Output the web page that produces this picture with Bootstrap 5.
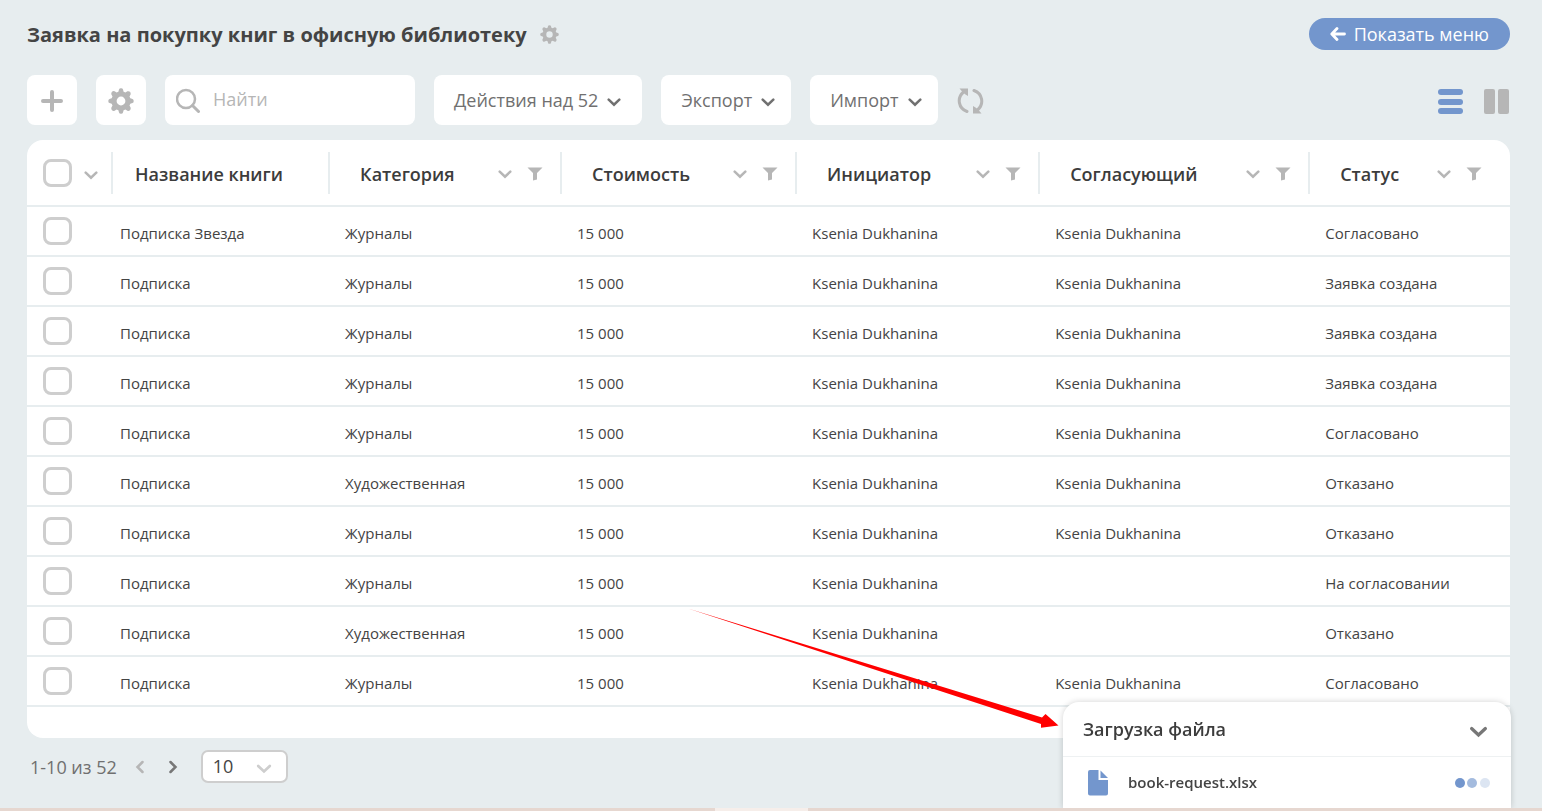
<!DOCTYPE html>
<html lang="ru">
<head>
<meta charset="utf-8">
<meta name="viewport" content="width=device-width, initial-scale=1">
<title>Заявка на покупку книг в офисную библиотеку</title>
<link href="https://cdn.jsdelivr.net/npm/bootstrap@5.3.0/dist/css/bootstrap.min.css" rel="stylesheet">
<style>
  :root { --page: #e7edef; --ink: #444; --muted: #777; --icon: #b6b6b6; --accent: #7396cd; }
  body { font-family: "Open Sans", "Noto Sans", sans-serif; font-size: 15px; color: var(--ink); background: var(--page); overflow-x: hidden; }
  .page-wrap { padding: 18px 32px 28px 27px; }
  svg { display: block; flex: none; }
  .page-title { padding-top: 1px; font-size: 20px; line-height: 31px; font-weight: 700; }
  .title-row { gap: 13px; }
  .btn-plain { padding: 0; border: 0; color: var(--icon); }
  .btn-dark-icon { color: var(--muted); }
  .btn-menu { height: 32px; padding: 0 21px; border: 0; font-size: 18px; line-height: 32px; font-weight: 500; color: #fff; background: var(--accent); }
  .toolbar { gap: 19px; margin-top: 25px; }
  .tool { height: 50px; gap: 9px; padding: 0 21px 0 20px; border: 0; border-radius: 8px; background: #fff; color: #707070; font-size: 18px; font-weight: 500; }
  .tool-menu { padding-right: 16px; }
  .tool-square { width: 50px; padding: 2px 0 0; color: var(--icon); }
  .tool:hover { background: #f8fafb; color: var(--muted); }
  .search-box { width: 250px; height: 50px; padding: 0 11px; gap: 13px; background: #fff; border-radius: 8px; color: var(--icon); }
  .search-box input { padding: 0 0 2px; border: 0; background: none; font-size: 18px; color: var(--ink); box-shadow: none; }
  .search-box input::placeholder { color: var(--icon); opacity: 1; }
  .refresh { padding-top: 2px; }
  .views { gap: 20px; padding-top: 3px; }
  .sheet { margin-top: 15px; padding-bottom: 31px; background: #fff; border-radius: 16px; }
  .requests { table-layout: fixed; width: 100%; min-width: 1200px; }
  .requests th { height: 66px; padding: 12px 0 0; border-bottom: 2px solid var(--page); font-size: 18px; font-weight: 600; vertical-align: top; }
  .requests .head { height: 42px; gap: 15px; padding: 2px 17px 0 30px; border-left: 2px solid var(--page); color: var(--icon); }
  .requests th:last-child .head { padding-right: 28px; }
  .requests .head-text { color: #3c3c3c; }
  .requests td { height: 50px; padding: 4px 0 0 17px; border-bottom: 2px solid var(--page); vertical-align: middle; white-space: nowrap; }
  .requests .pick { padding: 0 13px 0 16px; vertical-align: middle; }
  .requests .name-cell { padding-left: 9px; }
  .requests .head-name { padding-left: 22px; }
  .requests .form-check-input { display: block; width: 29px; height: 28px; margin: 0; border: 3px solid #cecece; border-radius: 8px; }
  .pager { margin-top: 12px; padding-left: 3px; gap: 23px; font-size: 18px; font-weight: 500; color: #707070; }
  .pager-count { padding-top: 1px; margin-right: -5px; }
  .page-size { width: 87px; height: 33px; }
  .page-size select { height: 33px; padding: 0 10px; border: 2px solid #cecece; border-radius: 7px; background: #fff; font-size: 18px; line-height: 29px; font-weight: 500; color: var(--ink); }
  .page-size svg { position: absolute; right: 16px; top: 13px; color: #cecece; pointer-events: none; }
  .upload { position: fixed; right: 31px; bottom: 3px; width: 448px; background: #fff; border-radius: 16px 16px 0 0; box-shadow: 0 0 6px rgba(0,0,0,.18); }
  .upload-head { height: 55px; padding: 0 23px 0 20px; border-bottom: 1px solid #eef1f2; }
  .upload-title { font-size: 18px; font-weight: 600; color: #3c3c3c; }
  .upload-file { height: 51px; padding: 0 21px 0 25px; color: var(--accent); }
  .file-name { margin-left: 20px; color: var(--ink); font-weight: 600; }
  .pointer { position: absolute; right: calc(100% + 4px); top: -94px; pointer-events: none; }
  .edge { position: fixed; left: 0; right: 0; bottom: 0; height: 3px; background: #e6d7d0; }
  .edge span { height: 3px; width: 6%; margin-left: 46.4%; background: #f6eeea; }
</style>
</head>
<body>
<svg class="d-none" aria-hidden="true">
  <symbol id="chev" viewBox="0 0 14 10"><path d="M1.700 2.700l5.300 5 5.300-5" fill="none" stroke="currentColor" stroke-width="2.500" stroke-linecap="round" stroke-linejoin="miter"/></symbol>
  <symbol id="funnel" viewBox="0 0 16 14"><path d="M.5.500h15L10 6v6.500l-4 1V6z" fill="currentColor"/></symbol>
  <symbol id="gear" viewBox="0 0 26 26"><path fill="currentColor" fill-rule="evenodd" d="M11 1.500Q11.300.3 13 .3t2 1.200l.6 2.200 1.800.7 2-1.100q1.600-.5 2.600.5t.6 2.600l-1.100 2 .8 1.900 2.200.6q1.200.3 1.200 2.100t-1.200 2.100l-2.200.6-.8 1.900 1.100 2q.5 1.500-.6 2.600t-2.600.5l-2-1.100-1.800.7-.6 2.200q-.3 1.200-2 1.200t-2-1.200l-.6-2.200-1.800-.7-2 1.100q-1.500.6-2.600-.5T3.400 19.600l1.100-2-.8-1.900-2.200-.6Q.3 14.800.3 13t1.200-2.100l2.200-.6.8-1.900-1.100-2Q2.900 4.900 4 3.800t2.600-.5l2 1.100 1.800-.7zM13 8.600a4.400 4.400 0 1 0 0 8.800 4.400 4.400 0 0 0 0-8.800z"/></symbol>
</svg>

<main class="page-wrap">
  <header class="title-row d-flex align-items-center">
    <h1 class="page-title m-0">Заявка на покупку книг в офисную библиотеку</h1>
    <button class="btn btn-plain me-auto" type="button" aria-label="Настройки заявки"><svg width="19" height="19"><use href="#gear"/></svg></button>
    <button class="btn btn-menu rounded-pill d-flex align-items-center gap-2" type="button">
      <svg width="16" height="14" viewBox="0 0 16 14"><path d="M7 1.500L1.800 7 7 12.500M2 7h12.500" fill="none" stroke="currentColor" stroke-width="2.800" stroke-linecap="round" stroke-linejoin="round"/></svg>Показать меню</button>
  </header>

  <div class="toolbar d-flex flex-wrap align-items-center">
    <button class="btn tool tool-square d-flex align-items-center justify-content-center" type="button" aria-label="Добавить"><svg width="22" height="22" viewBox="0 0 22 22"><path d="M11 2v18M2 11h18" stroke="currentColor" stroke-width="4" stroke-linecap="round"/></svg></button>
    <button class="btn tool tool-square d-flex align-items-center justify-content-center" type="button" aria-label="Настройки"><svg width="26" height="26"><use href="#gear"/></svg></button>
    <label class="search-box d-flex align-items-center">
      <svg width="24" height="26" viewBox="0 0 24 26"><circle cx="10" cy="12" r="9" fill="none" stroke="currentColor" stroke-width="2.500"/><path d="M16.500 18.500l6 6" stroke="currentColor" stroke-width="3" stroke-linecap="round"/></svg>
      <input class="form-control" type="text" placeholder="Найти" aria-label="Найти">
    </label>
    <button class="btn tool d-flex align-items-center" type="button">Действия над 52<svg class="mt-1" width="14" height="10"><use href="#chev"/></svg></button>
    <button class="btn tool tool-menu d-flex align-items-center" type="button">Экспорт<svg class="mt-1" width="14" height="10"><use href="#chev"/></svg></button>
    <button class="btn tool tool-menu d-flex align-items-center" type="button">Импорт<svg class="mt-1" width="14" height="10"><use href="#chev"/></svg></button>
    <button class="btn btn-plain refresh" type="button" aria-label="Обновить"><svg width="27" height="26" viewBox="0 0 27 26"><path d="M10 23.500C1.500 20.500-.5 10 6.500 4M17 2.500c8.500 3 10.500 13.500 3.500 19.500" fill="none" stroke="currentColor" stroke-width="3" stroke-linecap="round"/><path d="M2.500.5H11V8L8.500 6.500 5.500 4zM24.500 25.500H16V18l2.500 1.500 3 2.500z" fill="currentColor"/></svg></button>
    <div class="views d-flex align-items-center ms-auto">
      <button class="btn btn-plain" type="button" aria-label="Список"><svg width="26" height="26" viewBox="0 0 26 26" fill="#7396cd"><rect y="0" width="25" height="6" rx="3"/><rect y="10" width="25" height="6" rx="3"/><rect y="19" width="25" height="6" rx="3"/></svg></button>
      <button class="btn btn-plain" type="button" aria-label="Колонки"><svg width="26" height="26" viewBox="0 0 26 26" fill="currentColor"><rect width="11" height="25" rx="2"/><rect x="14" width="11" height="25" rx="2"/></svg></button>
    </div>
  </div>

  <section class="sheet overflow-hidden">
    <table class="requests">
      <colgroup><col style="width:84px"><col style="width:14.64%"><col style="width:15.640%"><col style="width:15.85%"><col style="width:16.39%"><col style="width:18.21%"><col></colgroup>
      <thead><tr>
        <th class="pick"><div class="d-flex align-items-center justify-content-between"><input class="form-check-input" type="checkbox" aria-label="Выбрать все"><button class="btn btn-plain pt-1" type="button" aria-label="Варианты выбора"><svg width="14" height="10"><use href="#chev"/></svg></button></div></th>
        <th><div class="head head-name d-flex align-items-center"><span class="head-text">Название книги</span></div></th>
        <th><div class="head d-flex align-items-center"><span class="head-text me-auto">Категория</span><button class="btn btn-plain" type="button" aria-label="Сортировать"><svg width="14" height="10"><use href="#chev"/></svg></button><button class="btn btn-plain" type="button" aria-label="Фильтр"><svg width="16" height="14"><use href="#funnel"/></svg></button></div></th>
        <th><div class="head d-flex align-items-center"><span class="head-text me-auto">Стоимость</span><button class="btn btn-plain" type="button" aria-label="Сортировать"><svg width="14" height="10"><use href="#chev"/></svg></button><button class="btn btn-plain" type="button" aria-label="Фильтр"><svg width="16" height="14"><use href="#funnel"/></svg></button></div></th>
        <th><div class="head d-flex align-items-center"><span class="head-text me-auto">Инициатор</span><button class="btn btn-plain" type="button" aria-label="Сортировать"><svg width="14" height="10"><use href="#chev"/></svg></button><button class="btn btn-plain" type="button" aria-label="Фильтр"><svg width="16" height="14"><use href="#funnel"/></svg></button></div></th>
        <th><div class="head d-flex align-items-center"><span class="head-text me-auto">Согласующий</span><button class="btn btn-plain" type="button" aria-label="Сортировать"><svg width="14" height="10"><use href="#chev"/></svg></button><button class="btn btn-plain" type="button" aria-label="Фильтр"><svg width="16" height="14"><use href="#funnel"/></svg></button></div></th>
        <th><div class="head d-flex align-items-center"><span class="head-text me-auto">Статус</span><button class="btn btn-plain" type="button" aria-label="Сортировать"><svg width="14" height="10"><use href="#chev"/></svg></button><button class="btn btn-plain" type="button" aria-label="Фильтр"><svg width="16" height="14"><use href="#funnel"/></svg></button></div></th>
      </tr></thead>
      <tbody>
        <tr><td class="pick"><input class="form-check-input" type="checkbox" aria-label="Выбрать строку 1"></td><td class="name-cell">Подписка Звезда</td><td>Журналы</td><td>15 000</td><td>Ksenia Dukhanina</td><td>Ksenia Dukhanina</td><td>Согласовано</td></tr>
        <tr><td class="pick"><input class="form-check-input" type="checkbox" aria-label="Выбрать строку 2"></td><td class="name-cell">Подписка</td><td>Журналы</td><td>15 000</td><td>Ksenia Dukhanina</td><td>Ksenia Dukhanina</td><td>Заявка создана</td></tr>
        <tr><td class="pick"><input class="form-check-input" type="checkbox" aria-label="Выбрать строку 3"></td><td class="name-cell">Подписка</td><td>Журналы</td><td>15 000</td><td>Ksenia Dukhanina</td><td>Ksenia Dukhanina</td><td>Заявка создана</td></tr>
        <tr><td class="pick"><input class="form-check-input" type="checkbox" aria-label="Выбрать строку 4"></td><td class="name-cell">Подписка</td><td>Журналы</td><td>15 000</td><td>Ksenia Dukhanina</td><td>Ksenia Dukhanina</td><td>Заявка создана</td></tr>
        <tr><td class="pick"><input class="form-check-input" type="checkbox" aria-label="Выбрать строку 5"></td><td class="name-cell">Подписка</td><td>Журналы</td><td>15 000</td><td>Ksenia Dukhanina</td><td>Ksenia Dukhanina</td><td>Согласовано</td></tr>
        <tr><td class="pick"><input class="form-check-input" type="checkbox" aria-label="Выбрать строку 6"></td><td class="name-cell">Подписка</td><td>Художественная</td><td>15 000</td><td>Ksenia Dukhanina</td><td>Ksenia Dukhanina</td><td>Отказано</td></tr>
        <tr><td class="pick"><input class="form-check-input" type="checkbox" aria-label="Выбрать строку 7"></td><td class="name-cell">Подписка</td><td>Журналы</td><td>15 000</td><td>Ksenia Dukhanina</td><td>Ksenia Dukhanina</td><td>Отказано</td></tr>
        <tr><td class="pick"><input class="form-check-input" type="checkbox" aria-label="Выбрать строку 8"></td><td class="name-cell">Подписка</td><td>Журналы</td><td>15 000</td><td>Ksenia Dukhanina</td><td></td><td>На согласовании</td></tr>
        <tr><td class="pick"><input class="form-check-input" type="checkbox" aria-label="Выбрать строку 9"></td><td class="name-cell">Подписка</td><td>Художественная</td><td>15 000</td><td>Ksenia Dukhanina</td><td></td><td>Отказано</td></tr>
        <tr><td class="pick"><input class="form-check-input" type="checkbox" aria-label="Выбрать строку 10"></td><td class="name-cell">Подписка</td><td>Журналы</td><td>15 000</td><td>Ksenia Dukhanina</td><td>Ksenia Dukhanina</td><td>Согласовано</td></tr>
      </tbody>
    </table>
  </section>

  <nav class="pager d-flex align-items-center" aria-label="Страницы">
    <span class="pager-count">1-10 из 52</span>
    <button class="btn btn-plain" type="button" aria-label="Предыдущая страница"><svg width="10" height="14" viewBox="0 0 10 14"><path d="M7.500 2l-5 5 5 5" fill="none" stroke="currentColor" stroke-width="2.500" stroke-linecap="round"/></svg></button>
    <button class="btn btn-plain btn-dark-icon" type="button" aria-label="Следующая страница"><svg width="10" height="14" viewBox="0 0 10 14"><path d="M2.500 2l5 5-5 5" fill="none" stroke="currentColor" stroke-width="2.500" stroke-linecap="round"/></svg></button>
    <div class="page-size position-relative">
      <select class="form-select" aria-label="Строк на странице"><option>10</option><option>25</option><option>50</option></select>
      <svg width="16" height="11" viewBox="0 0 14 10"><use href="#chev"/></svg>
    </div>
  </nav>
</main>

<aside class="upload" aria-label="Загрузка файла">
  <svg class="pointer" width="372" height="122" viewBox="0 0 372 122" aria-hidden="true"><path d="M1 .5L355 109.500 358.500 106 371.500 117.500 354 119.700 354 116z" fill="#f00"/></svg>
  <div class="upload-head d-flex align-items-center justify-content-between">
    <span class="upload-title">Загрузка файла</span>
    <button class="btn btn-plain btn-dark-icon pt-1" type="button" aria-label="Свернуть"><svg width="19" height="13" viewBox="0 0 14 10"><use href="#chev"/></svg></button>
  </div>
  <div class="upload-file d-flex align-items-center">
    <svg width="20" height="26" viewBox="0 0 20 26" fill="currentColor"><path d="M2 0h8.500v10H20v13.500a2 2 0 0 1-2 2H2a2 2 0 0 1-2-2V2a2 2 0 0 1 2-2z"/><path d="M12.500.5L20 8h-7.500z"/></svg>
    <span class="file-name me-auto">book-request.xlsx</span>
    <svg width="35" height="10" viewBox="0 0 35 10" fill="currentColor"><circle cx="5" cy="5" r="5"/><circle cx="17" cy="5" r="5" opacity=".65"/><circle cx="30" cy="5" r="5" opacity=".25"/></svg>
  </div>
</aside>
<div class="edge d-flex"><span></span></div>
<script src="https://cdn.jsdelivr.net/npm/bootstrap@5.3.0/dist/js/bootstrap.bundle.min.js"></script>
</body>
</html>
